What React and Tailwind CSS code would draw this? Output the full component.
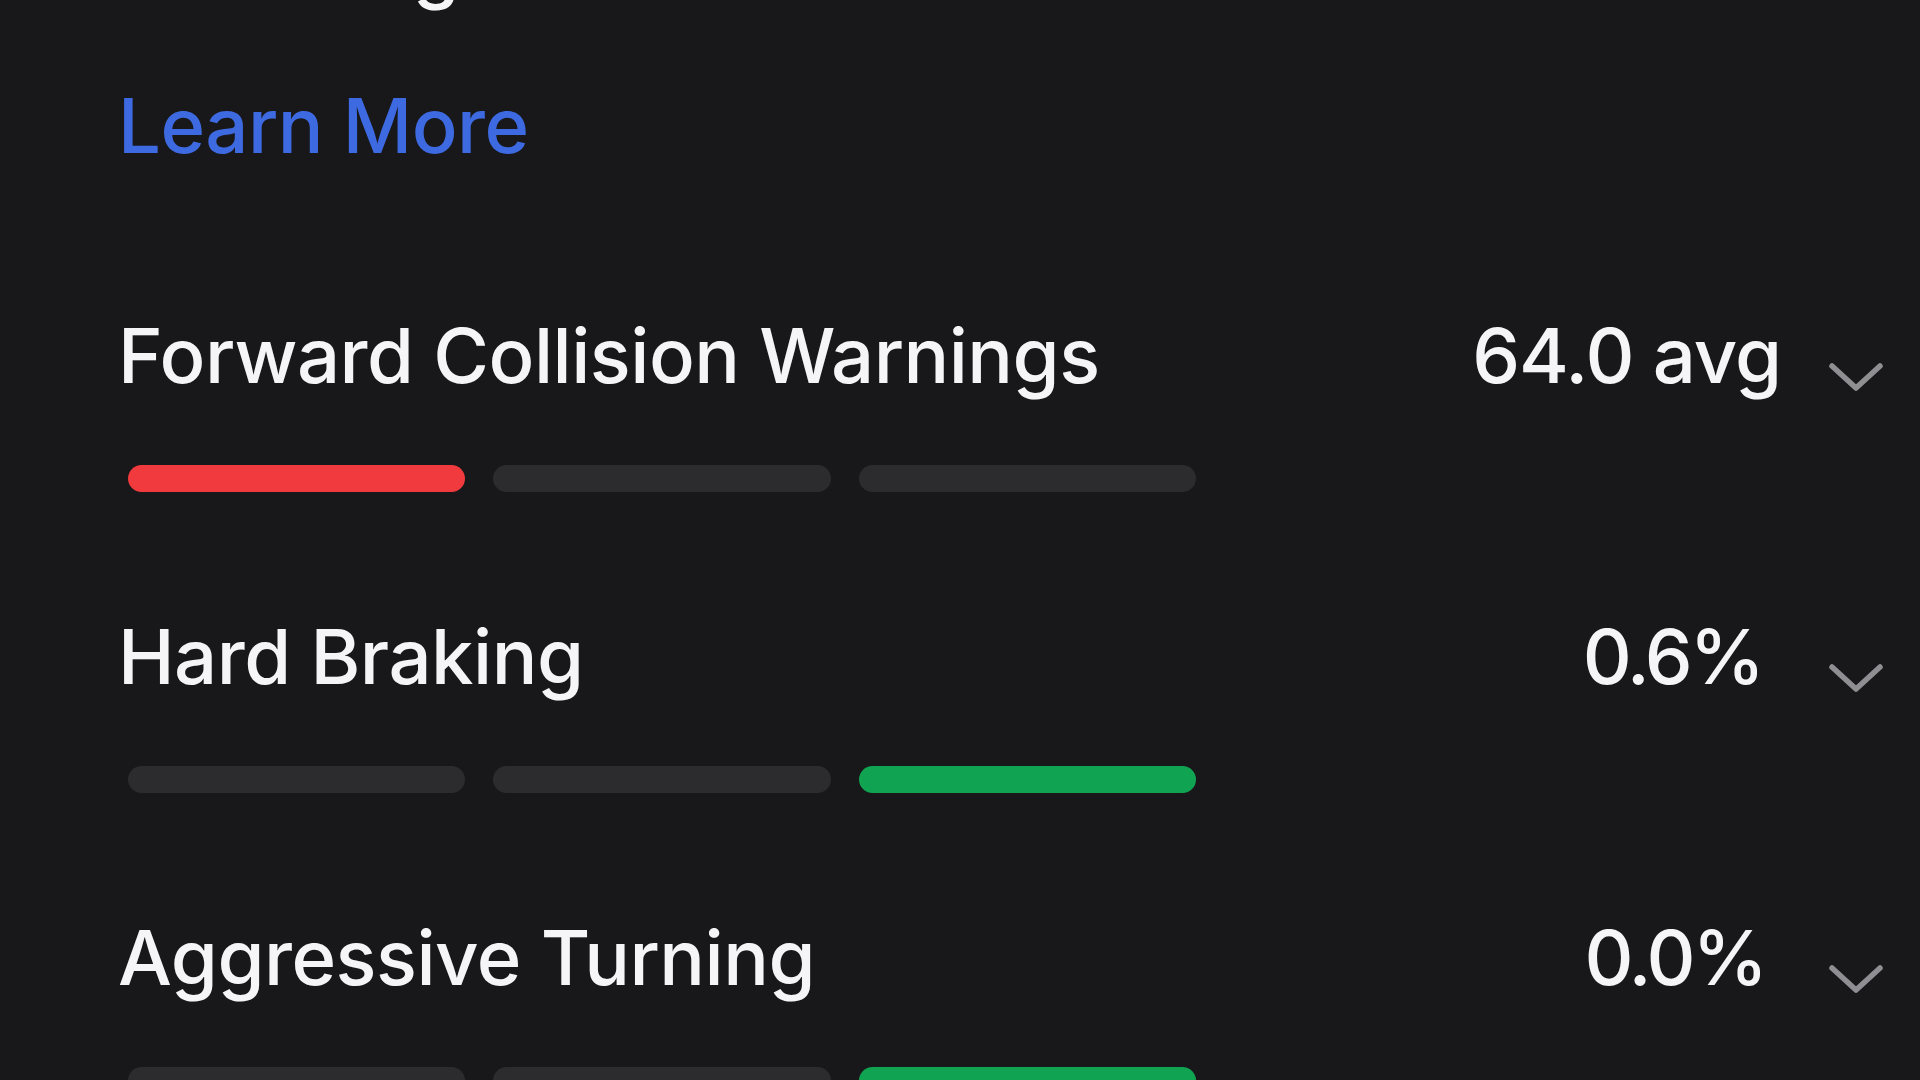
const factors = [
  { name: "Forward Collision Warnings", value: "64.0 avg", level: 0, pad: "mr-[47px] tracking-[-1px]" },
  { name: "Hard Braking", value: "0.6%", level: 2, pad: "mr-[66px] tracking-[-3px]" },
  { name: "Aggressive Turning", value: "0.0%", level: 2, pad: "mr-[63px] tracking-[-3px]" },
];

const barColors = ["bg-[#f03a3e]", "bg-[#f5a623]", "bg-[#10a452]"];

const Chevron = () => (
  <svg width="56" height="30" viewBox="0 0 56 30" className="mt-[53px] shrink-0">
    <polyline
      points="4,4 28,26 52,4"
      fill="none"
      stroke="#8e8e93"
      strokeWidth="5.5"
      strokeLinecap="round"
      strokeLinejoin="round"
    />
  </svg>
);

const Factor = ({ name, value, level, pad }) => {
  return (
    <div className="mb-[118px]">
      {/* Title + value */}
      <div className="flex items-start justify-between">
        <h3 className="text-[76px] leading-[92px] font-medium text-[#f5f5f7] tracking-[-0.5px]">
          {name}
        </h3>
        <div className="flex items-start">
          <span className={`text-[76px] leading-[92px] font-medium text-[#f5f5f7] ${pad}`}>
            {value}
          </span>
          <Chevron />
        </div>
      </div>

      {/* Rating bars */}
      <div className="ml-[10px] mt-[64px] grid grid-cols-3 gap-[28px] w-[1068px]">
        {[0, 1, 2].map((i) => (
          <div
            key={i}
            className={`h-[27px] rounded-full ${i === level ? barColors[level] : "bg-[#2c2c2e]"}`}
          />
        ))}
      </div>
    </div>
  );
};

const App = () => {
  return (
    <div
      className="h-[1080px] overflow-hidden bg-[#18181a] pl-[118px] pr-[36px]"
      style={{ fontFamily: "Inter, 'Liberation Sans', sans-serif" }}
    >
      {/* line cut off above */}
      <p className="mt-[-80px] text-[76px] leading-[92px] font-medium text-[#f5f5f7] tracking-[-0.5px]">
        Following
      </p>

      <a className="block mt-[67px] text-[76px] leading-[92px] font-medium text-[#3e6ae1] tracking-[-0.5px]">
        Learn More
      </a>

      <section className="mt-[138px]">
        {factors.map((f) => (
          <Factor key={f.name} {...f} />
        ))}
      </section>
    </div>
  );
};

export default App;
